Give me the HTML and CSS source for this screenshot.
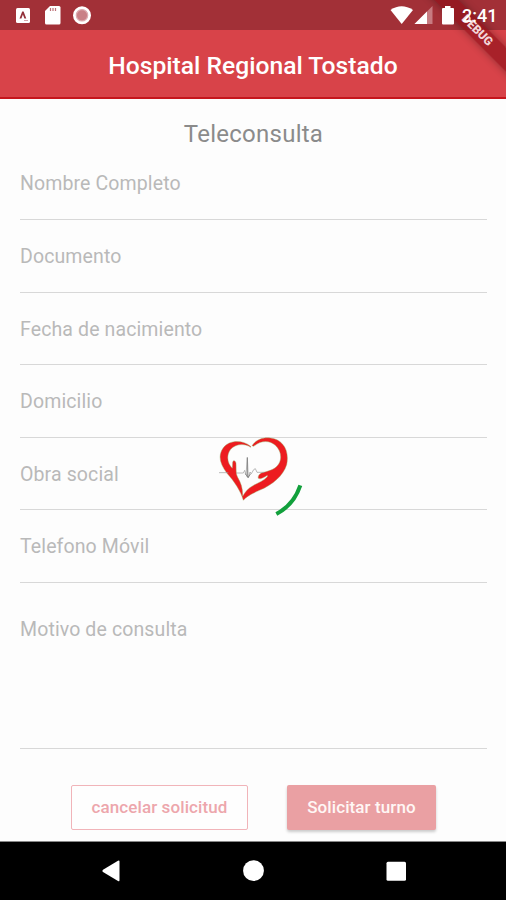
FILE: index.html
```html
<!DOCTYPE html>
<html lang="es">
<head>
<meta charset="utf-8">
<title>Teleconsulta</title>
<link rel="stylesheet" href="styles.css">
</head>
<body>
<div class="screen">
  <div class="status">
    <svg class="status-left" width="120" height="30" viewBox="0 0 120 30">
      <rect x="16" y="8" width="14" height="15" rx="1.5" fill="#fff"/>
      <path d="M19.500 18.500l2.700-7h1.400l2.700 7h-1.900l-1.500-4-1.500 4z" fill="#93303a"/>
      <path d="M24 20.500h4" stroke="#d6a5a9" stroke-width="1"/>
      <path d="M50 6h9q1.500 0 1.500 1.500v15.500q0 1.500-1.500 1.500h-12.500q-1.500 0-1.500-1.500v-12z" fill="#fff"/>
      <path d="M50.500 8v3M53 8v3M55.500 8v3" stroke="#bd7178" stroke-width="1.200"/>
      <circle cx="82" cy="15.300" r="9" fill="#fff"/>
      <circle cx="82" cy="15.300" r="5.700" fill="#c98086" stroke="#dcabb0" stroke-width="1.200"/>
    </svg>
    <svg class="status-right" width="70" height="30" viewBox="388 0 70 30">
      <path d="M390.500 10q11-7.500 22.500 0l-11.300 14z" fill="#fff"/>
      <path d="M432.500 6v18h-18z" fill="#c77b81"/>
      <path d="M427 11.500v12.500h-12.500z" fill="#fff"/>
      <path d="M445 6h5.500v2h2.500q1 0 1 1v14.500q0 1-1 1h-10q-1 0-1-1v-14.500q0-1 1-1h2z" fill="#fff"/>
    </svg>
    <span class="clock">2:41</span>
  </div>
  <header class="appbar"><h1>Hospital Regional Tostado</h1></header>
  <main class="form">
    <h2>Teleconsulta</h2>
    <div class="field"><span>Nombre Completo</span></div>
    <div class="field"><span>Documento</span></div>
    <div class="field"><span>Fecha de nacimiento</span></div>
    <div class="field"><span>Domicilio</span></div>
    <div class="field"><span>Obra social</span></div>
    <div class="field"><span>Telefono Móvil</span></div>
    <div class="field area"><span>Motivo de consulta</span></div>
    <div class="actions">
      <button class="cancel">cancelar solicitud</button>
      <button class="submit">Solicitar turno</button>
    </div>
  </main>
  <nav class="navbar">
    <svg width="506" height="58" viewBox="0 842 506 58" fill="#fff">
      <path d="M103 869.700l15-9q1.500-.8 1.500.8v18.800q0 1.600-1.500.7l-15-9q-1.500-1.150 0-2.300z"/>
      <circle cx="253.500" cy="870.700" r="10.400"/>
      <rect x="386.500" y="861.700" width="19.500" height="19" rx="1.500"/>
    </svg>
  </nav>
  <svg class="loader" width="110" height="100" viewBox="0 0 330 300">
    <g stroke="#8fae62" stroke-width="1.200" stroke-linejoin="round">
      <path fill="#ed1c20" d="M137 64C112 43 72 45 55 68C37 93 46 118 66 145C89 171 107 198 115 226C123 215 139 207 163 196C203 179 235 152 245 119C254 77 234 43 196 39C171 36 150 47 141 62L146 64C169 45 194 46 211 61C229 78 231 101 221 117C211 133 194 137 176 142C164 145 158 152 160 160C168 164 177 157 187 151L187 155C175 168 160 173 144 182C130 189 120 201 113 214C114 191 108 174 98 157C92 145 94 132 93 115C92 106 84 104 83 112L82 130C67 115 63 91 77 73C91 57 119 54 137 67Z"/>
    </g>
    <path d="M42 143H70M94 144H115L119 136L123 149L127 97L130 158L135 141L139 146L146 134L151 131L156 142H178" fill="none" stroke="#999" stroke-width="2"/>
    <path d="M127 98V156M121 146L129 158L137 146" fill="none" stroke="#777" stroke-width="2.500"/>
    <path d="M286 181Q266 240 214 267" fill="none" stroke="#12a03c" stroke-width="12"/>
  </svg>
  <div class="debug"><div class="ribbon">DEBUG</div></div>
</div>
</body>
</html>
```
FILE: styles.css
```css
* { box-sizing: border-box; }
body { margin: 0; font-family: Roboto, "Liberation Sans", sans-serif; }
.screen { position: relative; width: 506px; height: 900px; overflow: hidden; display: flex; flex-direction: column; background: #fdfdfd; }
.status { height: 30px; flex: none; display: flex; align-items: center; background: #a23037; }
.status-left { flex: none; }
.status-right { position: relative; z-index: 2; margin-left: 268px; flex: none; }
.clock { position: relative; z-index: 2; margin-left: 4px; color: #fff; font-size: 18px; font-weight: 500; line-height: 30px; padding-top: 2px; }
.appbar { height: 69px; flex: none; background: #d84349; border-bottom: 2px solid #c5161d; display: flex; align-items: center; justify-content: center; }
h1 { margin: 5px 0 0; color: #fff; font-size: 24.650px; font-weight: 500; line-height: 30px; white-space: nowrap; }
.form { height: 743px; flex: none; padding: 20px 19px 0 20px; border-bottom: 1px solid #888; }
h2 { margin: 0; text-align: center; color: #8b8b8b; font-size: 24px; font-weight: 400; line-height: 30px; letter-spacing: .25px; }
.field { height: 72.600px; border-bottom: 1.500px solid #d8d8d8; color: #b9b9b9; font-size: 19.500px; line-height: 24px; letter-spacing: .12px; padding-top: 25px; }
h2 + .field { height: 71px; padding-top: 23px; }
.area { height: 166px; padding-top: 35px; }
.actions { display: flex; padding: 36.500px 0 0 51px; gap: 39px; }
button { height: 45px; border-radius: 2px; padding: 0; font: 500 17px/43px Roboto, sans-serif; letter-spacing: .1px; white-space: nowrap; }
.cancel { width: 177px; border: 1px solid #f1b4b9; background: #fefefe; color: #eda6ac; }
.submit { width: 149px; border: 0; background: #eaa0a3; color: #fff7f5; box-shadow: 0 2px 3px #0003; }
.navbar { height: 58px; flex: none; background: #000; }
.navbar svg { display: block; }
.loader { position: absolute; left: 205px; top: 425px; }
.debug { position: absolute; z-index: 1; right: 0; top: 0; width: 90px; height: 90px; overflow: hidden; }
.ribbon { position: absolute; left: -11px; top: 22px; width: 144px; height: 17px; transform: rotate(45deg); background: rgba(142, 15, 25, .66); box-shadow: 0 0 8px #0005; color: #f3d5d8; font-size: 12px; font-weight: 900; line-height: 17px; letter-spacing: -.1px; text-align: center; }
```
